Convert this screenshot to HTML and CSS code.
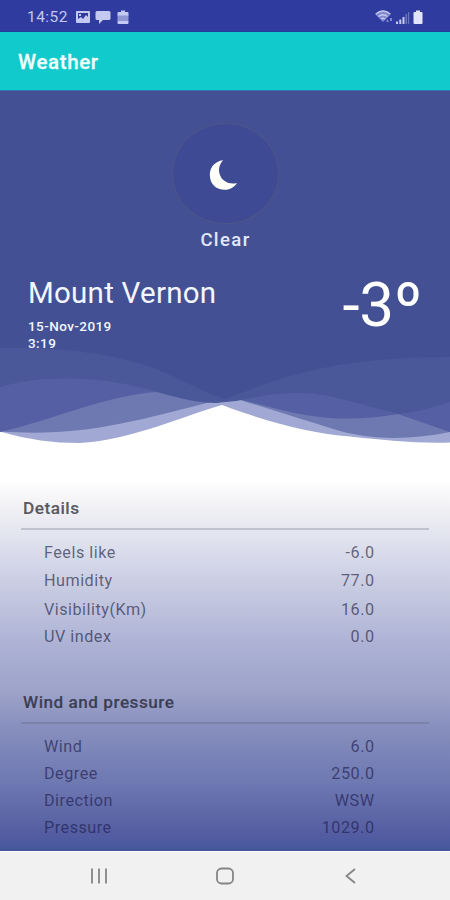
FILE: index.html
```html
<!DOCTYPE html>
<html lang="en">
<head>
<meta charset="utf-8">
<title>Weather</title>
<link rel="stylesheet" href="styles.css">
</head>
<body>
<div class="phone">
  <header class="status">
    <span class="clock">14:52</span>
    <svg class="notices" width="56" height="16" viewBox="0 0 56 16">
      <path fill-rule="evenodd" d="M2 2h12q1 0 1 1v10q0 1-1 1H2q-1 0-1-1V3q0-1 1-1zM3 4v6l3-2 2 2 3-4 2 2V4zM4 5h2v2H4z"/>
      <path d="M22 2h12q1.500 0 1.500 1.500v6q0 1.500-1.500 1.500h-6l-4 4v-4h-2q-1.500 0-1.500-1.500v-6Q20.500 2 22 2z"/>
      <path d="M46 1.500h4V3h2.500q1 0 1 1v2.500h-11V4q0-1 1-1H46zM42.500 12h11v2q0 1-1 1h-9q-1 0-1-1z"/>
      <path d="M42.500 6h11v6h-11z" opacity=".65"/>
    </svg>
    <svg class="signals" width="50" height="16" viewBox="0 0 50 16">
      <path d="M0 5Q8-2 16 5L8 13z" opacity=".55"/>
      <path class="arc" d="M.8 5Q8-1 15.200 5M3.500 7.500q4.500-3.500 9 0M6 10q2-1.500 4 0"/>
      <path d="M11 13l1.500-3 1.500 3zM15 9h2v3h-2z" opacity=".55"/>
      <path d="M21 12.500h2V15h-2zM24.300 10.500h2V15h-2zM27.500 8h2v7h-2z"/>
      <path d="M30.500 5h1.600v10h-1.600zM33 3h1.200v12H33z" opacity=".4"/>
      <path class="full" d="M41 1.500h4V3h1.500q1 0 1 1v10q0 1-1 1h-7q-1 0-1-1V4q0-1 1-1H41z"/>
    </svg>
  </header>
  <h1 class="appbar">Weather</h1>
  <main>
    <section class="hero">
      <svg class="waves" width="450" height="360" viewBox="0 90 450 360">
        <path class="w1" d="M0 340V430.500C30 439 52 442 80 442C128 439.500 172 419 222 404C270 422 312 432.500 350 435.500C383 439 415 442.500 450 441.500V340z"/>
        <path class="w2" d="M0 340V430.500C82 436 132 421 215 400L240 399C276 410 310 421 340 430C377 440 415 438 450 431V340z"/>
        <path class="w3" d="M0 340V431C30 424 55 415 88 405C130 392 170 386 192 395L215 402L238 398L270 406C320 420 355 420 398 413L450 431V340z"/>
        <path class="w4" d="M0 340V386C36 375 88 375 130 384C160 391 190 402 215 402L236 400C260 395 275 392 300 392C334 393 365 405 398 413C420 411 436 405 450 401V340z"/>
        <path class="w5" d="M0 90V347C60 346 108 352 145 364C175 374 199 390 225 398C255 387 278 377 310 370C350 360 400 356 450 356V90z"/>
      </svg>
      <div class="now">
        <div class="disc">
          <svg width="30" height="32" viewBox="0 0 30 32"><path d="M14 1C4 3 0 10 1 18C2 28 11 32 19 30.500C23 29.500 26 27 28 24C20 26 13 22 11 16C9 11 10 6 14 1z"/></svg>
        </div>
        <p class="cond">Clear</p>
      </div>
      <div class="place">
        <div>
          <h2 class="city">Mount Vernon</h2>
          <p class="date">15-Nov-2019</p>
          <p class="date">3:19</p>
        </div>
        <p class="temp"><span>-3</span><span class="deg">º</span></p>
      </div>
    </section>
    <section class="stats">
      <h3>Details</h3>
      <dl>
        <div><dt>Feels like</dt><dd>-6.0</dd></div>
        <div><dt>Humidity</dt><dd>77.0</dd></div>
        <div class="low"><dt>Visibility(Km)</dt><dd>16.0</dd></div>
        <div><dt>UV index</dt><dd>0.0</dd></div>
      </dl>
      <h3>Wind and pressure</h3>
      <dl class="wind">
        <div><dt>Wind</dt><dd>6.0</dd></div>
        <div><dt>Degree</dt><dd>250.0</dd></div>
        <div><dt>Direction</dt><dd>WSW</dd></div>
        <div><dt>Pressure</dt><dd>1029.0</dd></div>
      </dl>
    </section>
  </main>
  <nav>
    <svg width="18" height="18" viewBox="0 0 18 18"><path d="M2 1.500v15M9 1.500v15M16 1.500v15"/></svg>
    <svg width="18" height="18" viewBox="0 0 18 18"><rect x="1" y="1.500" width="16" height="15" rx="4.500"/></svg>
    <svg width="18" height="18" viewBox="0 0 18 18"><path d="M13 2L4.500 9l8.500 7"/></svg>
  </nav>
</div>
</body>
</html>
```

FILE: styles.css
```css
* { box-sizing: border-box; margin: 0; padding: 0; }
body { font-family: Roboto, sans-serif; width: 450px; height: 900px; overflow: hidden; }
.phone { width: 450px; height: 900px; display: flex; flex-direction: column; }
svg { display: block; }

.status { height: 32px; background: #303b9f; display: flex; align-items: center; padding: 2px 25px 0 27px; border-bottom: 1px solid #243a98; color: #c3c9f0; }
.clock { font-size: 15.500px; letter-spacing: .45px; width: 48px; }
.status svg { fill: #c3c9f0; }
.signals { margin-left: auto; }
.signals .arc { fill: none; stroke: #c3c9f0; stroke-width: 1.300; }
.signals .full { fill: #e2e5fa; }

.appbar { height: 59px; background: #10cacb; color: #effffc; font-size: 20.500px; font-weight: 500; line-height: 60px; padding-left: 18px; letter-spacing: .65px; border-bottom: 1px solid #3176b2; -webkit-text-stroke: .3px #effffc; }

main { height: 760px; background: linear-gradient(#fff 390px, #f0f0f4 418px, #dfe1ee 450px, #bfc3dd 515px, #abb0d4 558px, #9da3c9 600px, #8890be 635px, #6f79b2 690px, #535ca1 745px, #45579b 759px); }
.hero { position: relative; height: 360px; color: #f4f6ff; }
.waves { position: absolute; left: 0; top: 0; }
.w1 { fill: #a1a8d3; }
.w2 { fill: #6e79b1; }
.w3 { fill: #545fa4; }
.w4 { fill: #4a5899; }
.w5 { fill: #435194; }
.now { position: relative; height: 182px; padding-top: 32px; display: flex; flex-direction: column; align-items: center; }
.disc { width: 107px; height: 101px; border-radius: 50%; background: #3e4a93; border: 1px solid #4b5688; display: flex; align-items: center; justify-content: center; }
.disc svg { fill: #fffffa; margin: 2px 3px 0 0; }
.cond { font-size: 18.500px; font-weight: 500; line-height: 22px; letter-spacing: 1.400px; margin-top: 5px; padding-left: 1px; color: #e3e7fa; }
.place { position: relative; display: flex; justify-content: space-between; padding: 2px 28px 0; }
.city { font-size: 29.500px; font-weight: 400; line-height: 38px; letter-spacing: .25px; margin-top: -1px; }
.date { font-size: 13.500px; font-weight: 500; line-height: 17px; letter-spacing: .42px; }
.city + .date { margin-top: 6px; }
.temp { font-size: 62px; line-height: 60px; letter-spacing: -.2px; display: flex; color: #fff; }

.stats { padding: 43px 21px 0; letter-spacing: .5px; color: rgba(35, 35, 65, .66); }
h3 { font-size: 17.200px; font-weight: 500; line-height: 28px; height: 36px; padding-left: 2px; border-bottom: 2px solid rgba(80, 80, 105, .24); color: rgba(25, 25, 40, .7); -webkit-text-stroke: .2px; }
dl { padding: 8.500px 54.500px 0 23px; height: 158px; }
dl div { display: flex; justify-content: space-between; font-size: 16.200px; line-height: 28px; height: 28px; }
.low { padding-top: 1px; }
.wind div { height: 27.300px; }
.wind { color: rgba(30, 30, 80, .68); }

nav { height: 49px; background: #f1f1f1; border-top: 1px solid #fff; display: flex; justify-content: space-between; align-items: center; padding: 0 90px; }
nav svg { fill: none; stroke: #858585; stroke-width: 1.800; }
```
